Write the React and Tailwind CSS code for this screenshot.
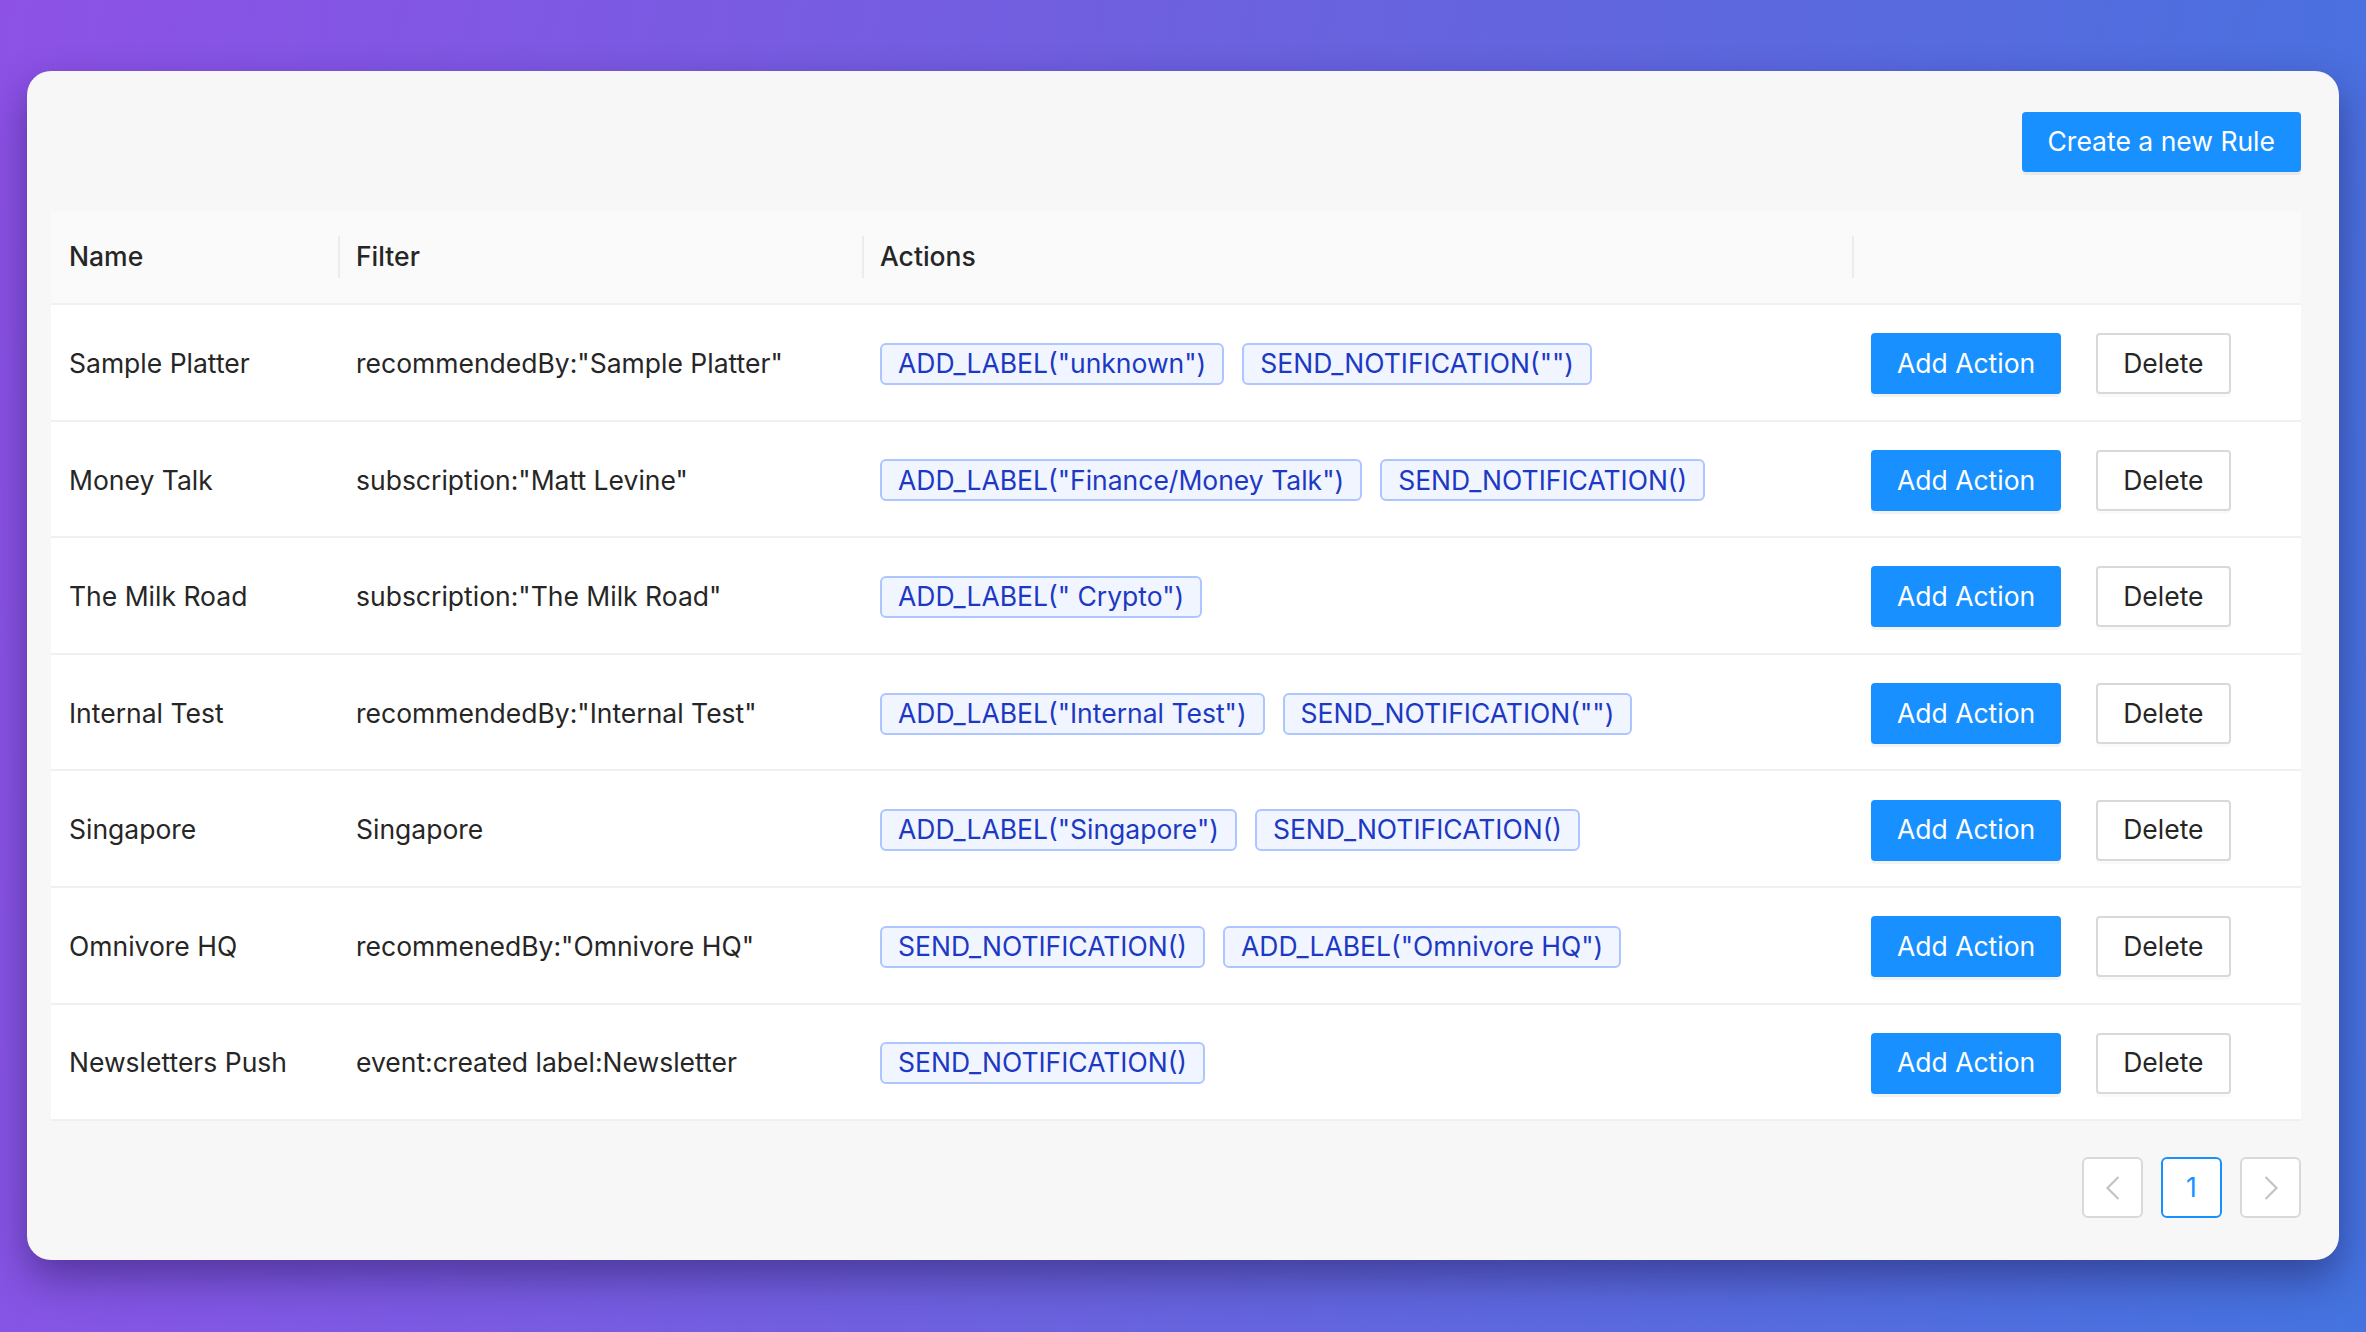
import React from 'react';

const rules = [
    { name: 'Sample Platter', filter: 'recommendedBy:"Sample Platter"', actions: ['ADD_LABEL("unknown")', 'SEND_NOTIFICATION("")'] },
    { name: 'Money Talk', filter: 'subscription:"Matt Levine"', actions: ['ADD_LABEL("Finance/Money Talk")', 'SEND_NOTIFICATION()'] },
    { name: 'The Milk Road', filter: 'subscription:"The Milk Road"', actions: ['ADD_LABEL(" Crypto")'] },
    { name: 'Internal Test', filter: 'recommendedBy:"Internal Test"', actions: ['ADD_LABEL("Internal Test")', 'SEND_NOTIFICATION("")'] },
    { name: 'Singapore', filter: 'Singapore', actions: ['ADD_LABEL("Singapore")', 'SEND_NOTIFICATION()'] },
    { name: 'Omnivore HQ', filter: 'recommenedBy:"Omnivore HQ"', actions: ['SEND_NOTIFICATION()', 'ADD_LABEL("Omnivore HQ")'] },
    { name: 'Newsletters Push', filter: 'event:created label:Newsletter', actions: ['SEND_NOTIFICATION()'] },
];

const cols = 'grid grid-cols-[287px_524px_990px_448px]';

const HeaderCell = ({ children, sep }) => (
    <div className="relative flex items-center px-[18px]">
        {sep && <span className="absolute left-0 top-1/2 -translate-y-1/2 w-[2px] h-[42px] bg-[#ececec]" />}
        <span className="font-medium">{children}</span>
    </div>
);

const Tag = ({ children }) => (
    <span className="inline-flex items-center h-[42px] px-[16px] rounded-[6px] border-2 border-[#adc6ff] bg-[#f0f5ff] text-[#1d39c4] whitespace-nowrap">
        {children}
    </span>
);

const Chevron = ({ dir }) => (
    <svg width="16" height="26" viewBox="0 0 16 26" fill="none" stroke="#c4c4c4" strokeWidth="2.2">
        {dir === 'left' ? <path d="M13.5 2 L2.5 13 L13.5 24" /> : <path d="M2.5 2 L13.5 13 L2.5 24" />}
    </svg>
);

export default function App() {
    return (
        <div
            className="w-full h-[1332px] bg-[linear-gradient(100deg,#8d51e6_0%,#6a62de_50%,#4473df_100%)] pt-[71px] px-[27px] text-[26.5px] text-[#262626]"
            style={{ fontFamily: 'Inter, "Noto Sans", sans-serif' }}
        >
            <div className="h-[1189px] rounded-[24px] bg-[#f7f7f7] shadow-[0_18px_40px_rgba(25,15,70,0.45)] pt-[41px] pl-[24px] pr-[38px] pb-[42px] flex flex-col">
                <div className="flex justify-end">
                    <button className="h-[60px] px-[26px] rounded-[4px] bg-[#1890ff] text-white shadow-[0_3px_0_rgba(0,0,0,0.05)]">
                        Create a new Rule
                    </button>
                </div>

                <div className="mt-[39px]">
                    <div className={`${cols} h-[94px] bg-[#fafafa] border-b-2 border-[#f0f0f0]`}>
                        <HeaderCell>Name</HeaderCell>
                        <HeaderCell sep>Filter</HeaderCell>
                        <HeaderCell sep>Actions</HeaderCell>
                        <HeaderCell sep />
                    </div>
                    {rules.map((r, i) => (
                        <div key={i} className={`${cols} h-[116.6px] pt-[3px] bg-white border-b-2 border-[#f0f0f0]`}>
                            <div className="flex items-center px-[18px]">{r.name}</div>
                            <div className="flex items-center px-[18px]">{r.filter}</div>
                            <div className="flex items-center gap-[18px] px-[18px]">
                                {r.actions.map((a, j) => (
                                    <Tag key={j}>{a}</Tag>
                                ))}
                            </div>
                            <div className="flex items-center gap-[35px] px-[19px]">
                                <button className="h-[61px] px-[26px] rounded-[4px] bg-[#1890ff] text-white shadow-[0_3px_0_rgba(0,0,0,0.05)]">
                                    Add Action
                                </button>
                                <button className="h-[61px] px-[25px] rounded-[4px] bg-white border-2 border-[#d9d9d9] text-[#262626] shadow-[0_3px_0_rgba(0,0,0,0.02)]">
                                    Delete
                                </button>
                            </div>
                        </div>
                    ))}
                </div>

                <div className="mt-[36px] flex justify-end gap-[18px]">
                    <div className="w-[61px] h-[61px] rounded-[6px] border-2 border-[#d9d9d9] bg-white flex items-center justify-center">
                        <Chevron dir="left" />
                    </div>
                    <div className="w-[61px] h-[61px] rounded-[6px] border-2 border-[#1890ff] bg-white flex items-center justify-center text-[#1890ff]">
                        1
                    </div>
                    <div className="w-[61px] h-[61px] rounded-[6px] border-2 border-[#d9d9d9] bg-white flex items-center justify-center">
                        <Chevron dir="right" />
                    </div>
                </div>
            </div>
        </div>
    );
}
